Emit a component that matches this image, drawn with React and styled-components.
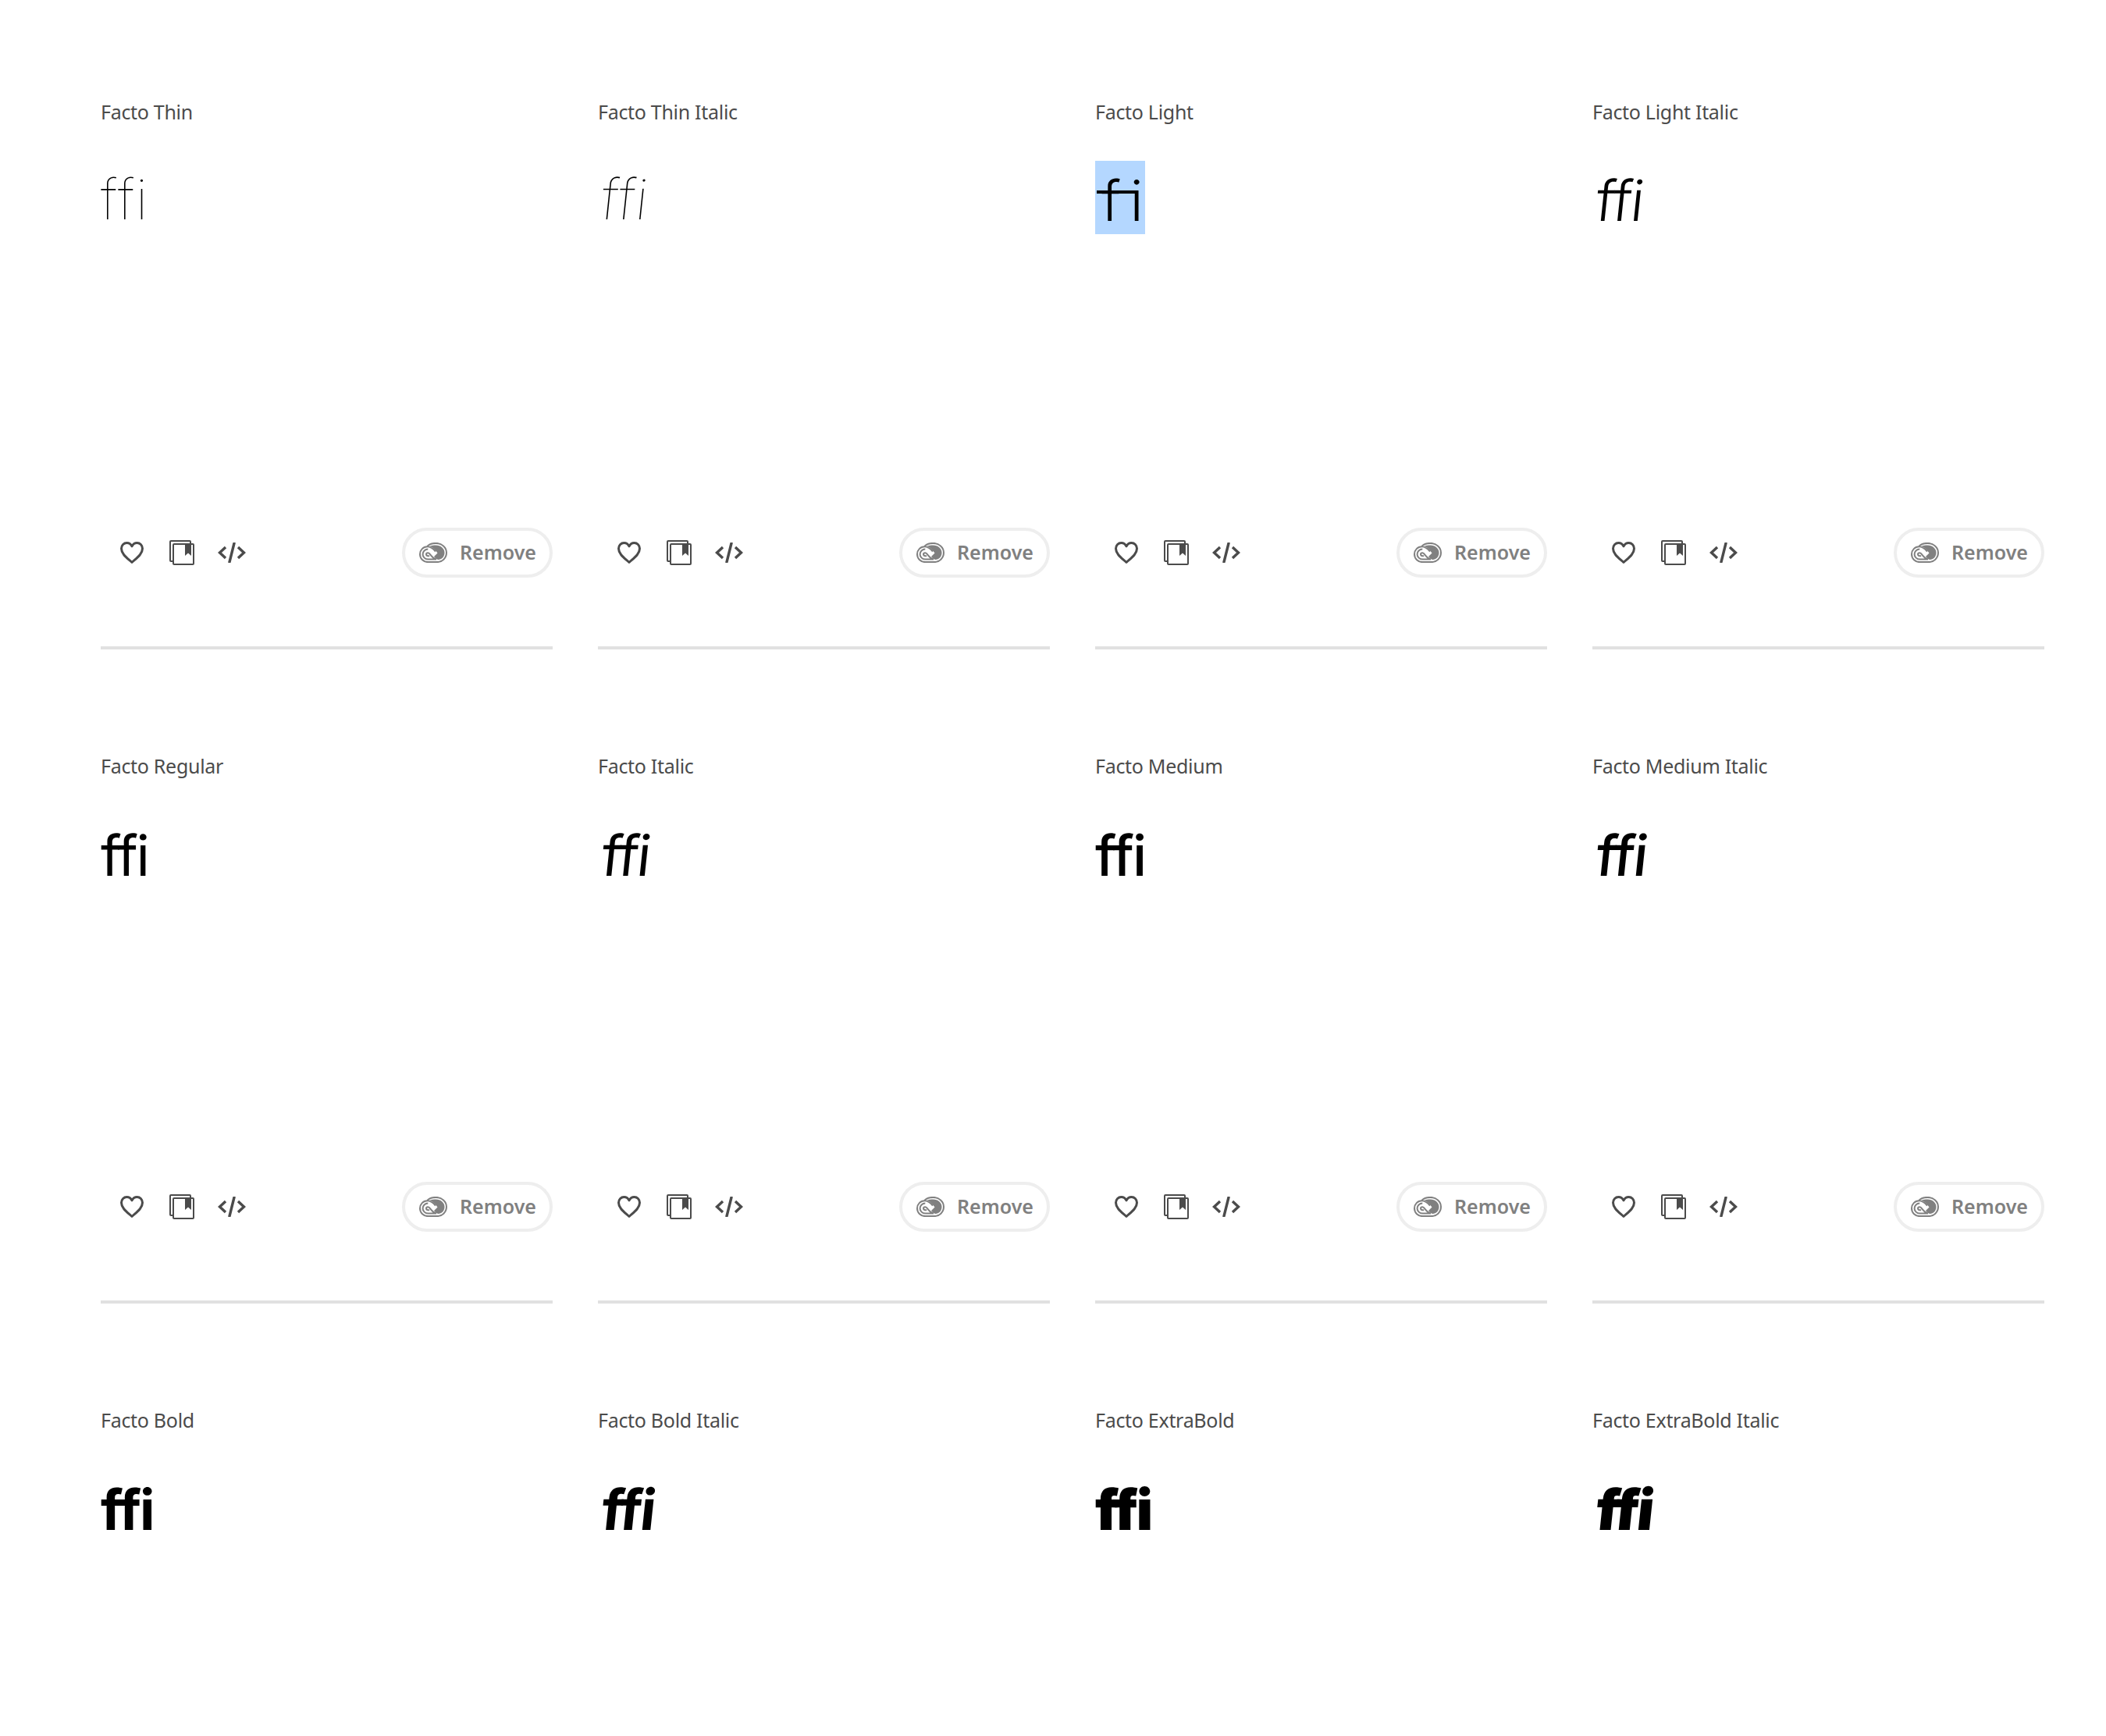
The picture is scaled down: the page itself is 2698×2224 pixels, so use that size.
import React from "react";
import styled, { createGlobalStyle } from "styled-components";

const GlobalStyle = createGlobalStyle`
  html, body {
    margin: 0;
    background: #fff;
  }
  body {
    height: 2224px;
    overflow: hidden;
    font-family: "Noto Sans", "Liberation Sans", sans-serif;
  }
`;

const fonts = [
  { name: "Facto Thin", weight: 100, shift: 2, spacing: 1.5 },
  { name: "Facto Thin Italic", weight: 100, italic: true, shift: 2, spacing: 1 },
  { name: "Facto Light", weight: 300, selected: true },
  { name: "Facto Light Italic", weight: 300, italic: true, shift: 4, spacing: -1.5 },
  { name: "Facto Regular", weight: 400, shift: 5, spacing: -2.5 },
  { name: "Facto Italic", weight: 400, italic: true, shift: 5, spacing: -2.5 },
  { name: "Facto Medium", weight: 500, shift: 5, spacing: -2 },
  { name: "Facto Medium Italic", weight: 500, italic: true, shift: 5, spacing: -2 },
  { name: "Facto Bold", weight: 700, shift: 5, spacing: -2.5, last: true },
  { name: "Facto Bold Italic", weight: 700, italic: true, shift: 5, spacing: -2.5, last: true },
  { name: "Facto ExtraBold", weight: 900, shift: 5, spacing: -3, last: true },
  { name: "Facto ExtraBold Italic", weight: 900, italic: true, shift: 5, spacing: -3, last: true },
];

function HeartIcon() {
  return (
    <svg width="32" height="30" viewBox="0 0 32 30" fill="none">
      <path
        d="M16 27.5 C10 22 2.5 17 2.5 9.8 C2.5 5.4 5.8 2.5 9.4 2.5 C12.2 2.5 14.6 4 16 6.8 C17.4 4 19.8 2.5 22.6 2.5 C26.2 2.5 29.5 5.4 29.5 9.8 C29.5 17 22 22 16 27.5 Z"
        stroke="#4b4b4b"
        strokeWidth="3"
        strokeLinejoin="round"
      />
    </svg>
  );
}

function BookIcon() {
  return (
    <svg width="32" height="32" viewBox="0 0 32 32" fill="none">
      <path
        d="M4 27 H2 a1 1 0 0 1 -1 -1 V2 a1 1 0 0 1 1 -1 H26 a1 1 0 0 1 1 1 V5"
        stroke="#4b4b4b"
        strokeWidth="2"
      />
      <rect x="5" y="5" width="26" height="26" rx="1" stroke="#4b4b4b" strokeWidth="2" />
      <path d="M20 5 H28 V20 L24 16.5 L20 20 Z" fill="#4b4b4b" />
    </svg>
  );
}

function CodeIcon() {
  return (
    <svg width="36" height="26" viewBox="0 0 36 26" fill="none">
      <path d="M10 6 L2.5 13 L10 20" stroke="#4b4b4b" strokeWidth="3.4" />
      <path d="M26 6 L33.5 13 L26 20" stroke="#4b4b4b" strokeWidth="3.4" />
      <path d="M21 1 L15 25" stroke="#4b4b4b" strokeWidth="3.4" strokeLinecap="round" />
    </svg>
  );
}

// creative cloud mark: outline of both lobes, ring on the left, solid lobe on the right
function CloudIcon() {
  return (
    <svg width="36" height="26" viewBox="0 0 36 26" fill="none">
      <path
        d="M10 5.4 C12 2.6 16.5 0.9 21.5 0.9 C29 0.9 35 6.2 35 13 C35 20 29.5 25.1 22.5 25.1 H11.5 C5.6 25.1 1 20.8 1 15 C1 9.6 5.2 5.3 10.5 5.3 C15.5 5.3 18.5 8.5 21 11.5"
        stroke="#808080"
        strokeWidth="2"
      />
      <path
        d="M11.3 8.6 C7.6 8.6 4.6 11.4 4.6 15 C4.6 18.6 7.6 21.6 11.5 21.6 H22 C18.5 21 16.8 18.6 15 16.4 C13.8 14.8 12.8 13.2 11.3 13.2 C10 13.2 9 14 9 15.1 C9 16.3 10 17.2 11.4 17.2 H13.2"
        stroke="#808080"
        strokeWidth="2"
      />
      <path
        d="M13.8 4.4 C15.6 3.4 18.5 3.4 21.5 3.4 C27.5 3.4 32.5 7.5 32.5 13 C32.5 18.2 28.8 22 24.5 22 C22 21.4 20.8 20 19 18 L23.5 13.6 C20.8 10 18 6.4 13.8 4.4 Z"
        fill="#808080"
      />
    </svg>
  );
}

function FontCard({ font }) {
  return (
    <Card $last={font.last}>
      <Label>{font.name}</Label>
      {font.selected ? (
        <Sample $weight={font.weight}>
          <Selected>fi</Selected>
        </Sample>
      ) : (
        <Sample $weight={font.weight} $shift={font.shift}>
          <Glyphs $italic={font.italic} $spacing={font.spacing}>
            ffi
          </Glyphs>
        </Sample>
      )}
      {!font.last && (
        <Actions>
          <IconGroup>
            <IconSlot>
              <HeartIcon />
            </IconSlot>
            <IconSlot>
              <BookIcon />
            </IconSlot>
            <IconSlot>
              <CodeIcon />
            </IconSlot>
          </IconGroup>
          <RemoveButton>
            <CloudIcon />
            <span>Remove</span>
          </RemoveButton>
        </Actions>
      )}
    </Card>
  );
}

export default function App() {
  return (
    <>
      <GlobalStyle />
      <Page>
        {fonts.map((font) => (
          <FontCard key={font.name} font={font} />
        ))}
      </Page>
    </>
  );
}

const Page = styled.main`
  display: grid;
  grid-template-columns: repeat(4, 579px);
  column-gap: 58px;
  row-gap: 132px;
  padding: 126px 0 0 129px;
`;

const Card = styled.section`
  padding-bottom: 88px;
  border-bottom: ${(p) => (p.$last ? "none" : "4px solid #e1e1e1")};
`;

const Label = styled.div`
  height: 36px;
  font-size: 25px;
  line-height: 34px;
  letter-spacing: -0.3px;
  color: #4b4b4b;
`;

const Sample = styled.div`
  box-sizing: border-box;
  height: 94px;
  margin-top: 44px;
  padding-top: ${(p) => p.$shift || 0}px;
  font-family: Inter, "Liberation Sans", sans-serif;
  font-size: 72px;
  line-height: 94px;
  color: #000;
  font-weight: ${(p) => p.$weight};
`;

const Glyphs = styled.span`
  display: inline-block;
  letter-spacing: ${(p) => p.$spacing}px;
  transform-origin: 0 72%;
  transform: ${(p) => (p.$italic ? "skewX(-6deg)" : "none")};
  margin-left: ${(p) => (p.$italic ? 3 : 0)}px;
`;

const Selected = styled.span`
  position: relative;
  display: inline-block;
  box-sizing: border-box;
  width: 64px;
  height: 94px;
  padding-left: 8px;
  background: #b4d7ff;
  letter-spacing: 12px;
  line-height: 102px;

  &::before {
    content: "";
    position: absolute;
    left: 2px;
    top: 38px;
    width: 52px;
    height: 4px;
    background: #000;
  }
`;

const Actions = styled.div`
  display: flex;
  align-items: center;
  justify-content: space-between;
  margin-top: 376px;
`;

const IconGroup = styled.div`
  display: flex;
  padding-left: 8px;
`;

const IconSlot = styled.button`
  display: flex;
  align-items: center;
  justify-content: center;
  width: 64px;
  height: 64px;
  padding: 0;
  border: none;
  background: none;
`;

const RemoveButton = styled.button`
  display: flex;
  align-items: center;
  gap: 16px;
  box-sizing: border-box;
  width: 193px;
  height: 64px;
  padding: 0 0 2px 18px;
  border: 4px solid #eeeeee;
  border-radius: 32px;
  background: #fff;
  font-family: "Noto Sans", "Liberation Sans", sans-serif;
  font-size: 25px;
  font-weight: 600;
  color: #808080;

  svg {
    margin-top: 2px;
  }
`;
